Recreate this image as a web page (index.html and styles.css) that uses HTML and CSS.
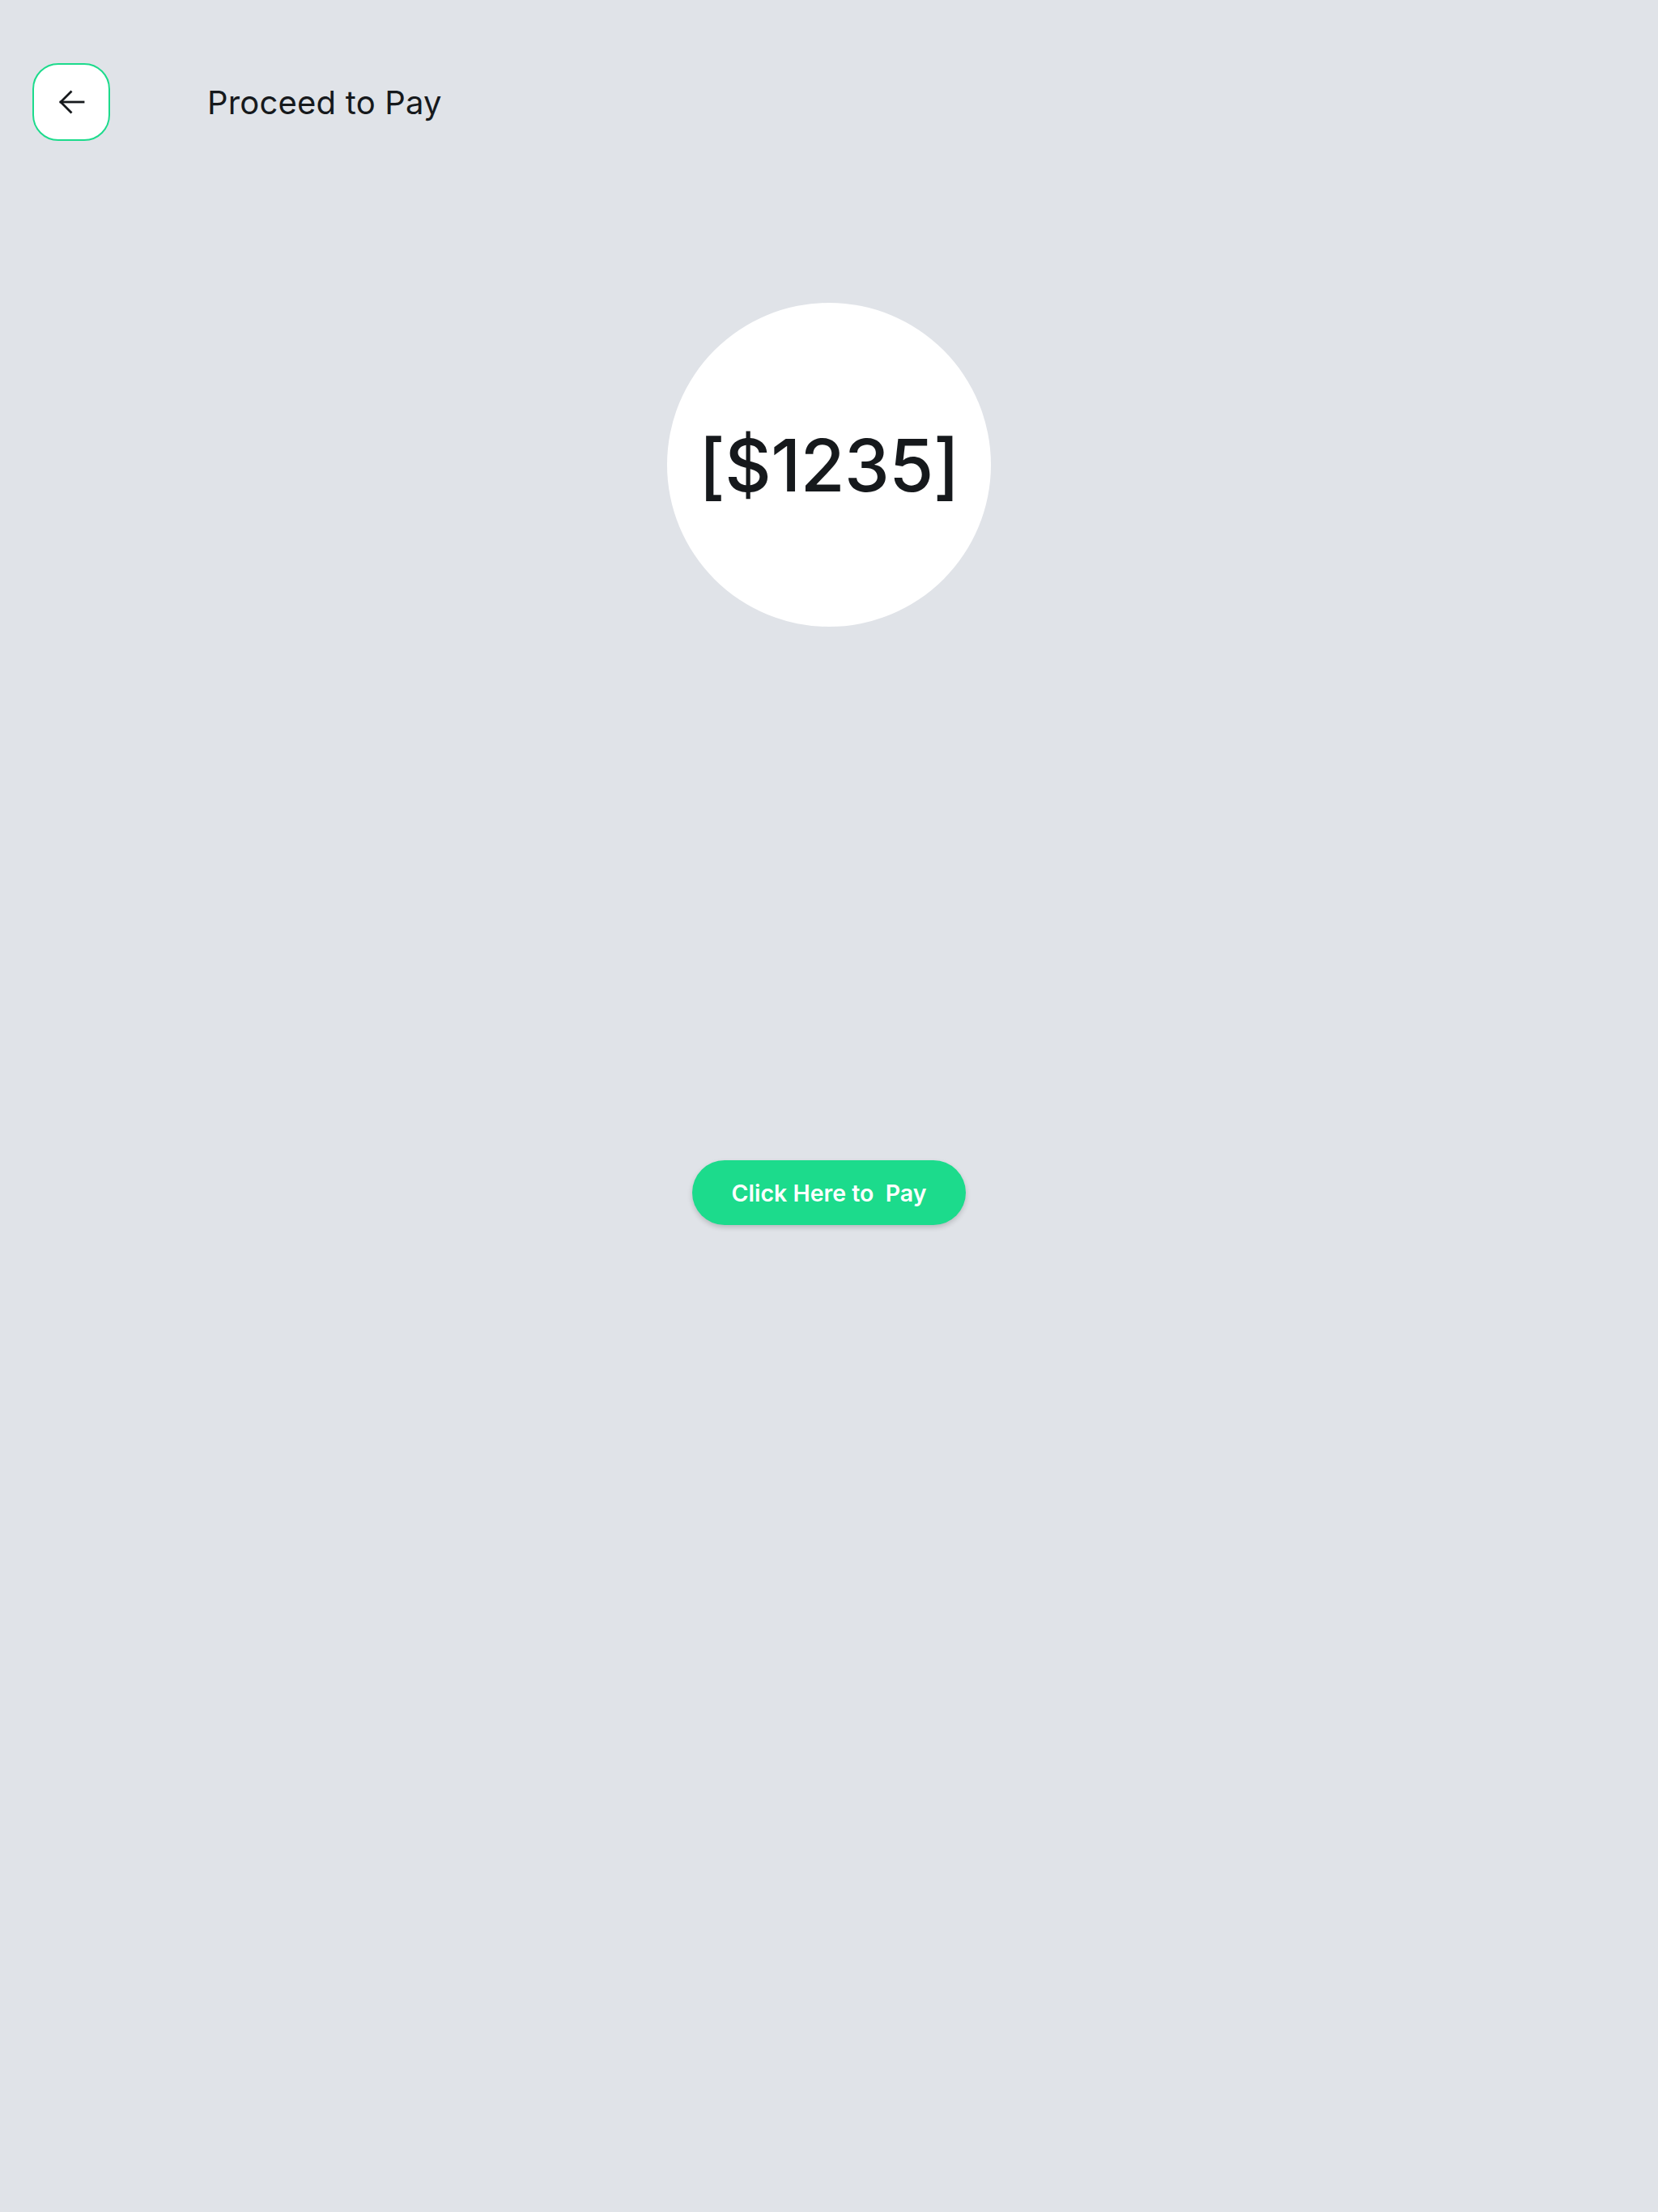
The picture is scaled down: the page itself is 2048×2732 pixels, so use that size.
FILE: index.html
```html
<!DOCTYPE html>
<html lang="en">
<head>
<meta charset="utf-8">
<title>Proceed to Pay</title>
<link rel="stylesheet" href="styles.css">
</head>
<body>
<div class="page">
  <header class="header">
    <button class="back" aria-label="Back">
      <svg width="36" height="36" viewBox="0 0 36 36" fill="none" stroke="#16191c" stroke-width="2.8" stroke-linecap="square" stroke-linejoin="miter">
        <path d="M33 18H5"/>
        <path d="M17.5 5.5L5 18L17.5 30.5"/>
      </svg>
    </button>
    <h1 class="title">Proceed to Pay</h1>
  </header>
  <main class="main">
    <div class="amount-circle"><span class="amount">[$1235]</span></div>
    <button class="pay">Click Here to&nbsp; Pay</button>
  </main>
</div>
</body>
</html>
```
FILE: styles.css
```css
html, body {
  margin: 0;
  padding: 0;
}
body {
  background: #e0e3e8;
  font-family: Inter, Lato, sans-serif;
  color: #16191c;
}
.page {
  width: 2048px;
  min-height: 2732px;
}
.header {
  display: flex;
  align-items: center;
  padding: 78px 0 0 40px;
  gap: 120px;
}
.back {
  width: 96px;
  height: 96px;
  box-sizing: border-box;
  border: 2px solid #1cdb8c;
  border-radius: 32px;
  background: #ffffff;
  display: flex;
  align-items: center;
  justify-content: center;
  padding: 0;
}
.title {
  margin: 0;
  font-size: 40px;
  font-weight: 400;
  letter-spacing: 0.2px;
}
.main {
  display: flex;
  flex-direction: column;
  align-items: center;
  padding-top: 200px;
}
.amount-circle {
  width: 400px;
  height: 400px;
  border-radius: 50%;
  background: #ffffff;
  display: flex;
  align-items: center;
  justify-content: center;
}
.amount {
  font-size: 89px;
  font-weight: 500;
  line-height: 1;
  letter-spacing: -0.5px;
}
.pay {
  margin-top: 659px;
  width: 338px;
  height: 80px;
  border: none;
  border-radius: 40px;
  background: #1cdb8c;
  color: #ffffff;
  font-family: Inter, Lato, sans-serif;
  font-size: 28.5px;
  font-weight: 600;
  box-shadow: 0 3px 6px rgba(0, 0, 0, 0.18);
  padding: 0;
}
```
